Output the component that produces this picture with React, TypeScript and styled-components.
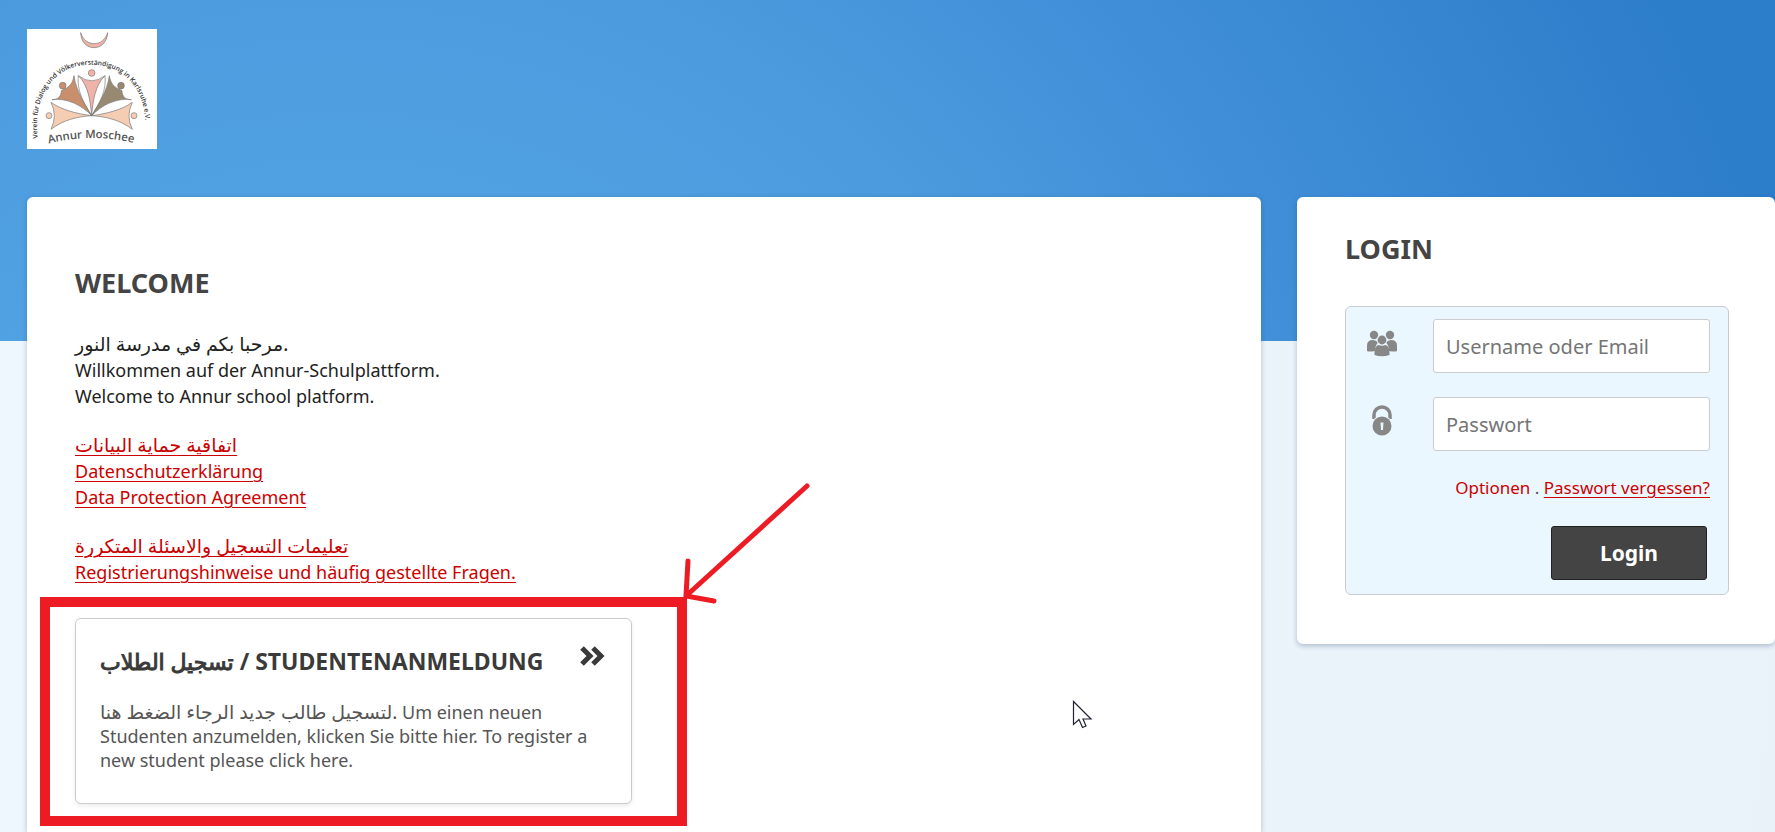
import React from "react";
import styled, { createGlobalStyle } from "styled-components";

const GlobalStyle = createGlobalStyle`
  *, *::before, *::after { box-sizing: border-box; }
  body {
    margin: 0;
    font-family: "Noto Sans", "DejaVu Sans", sans-serif;
    font-size: 18px;
    line-height: 26px;
    color: #222;
    background: #edf5fd;
  }
  h1, h2, h3, p { margin: 0; }
`;

const Page = styled.div`
  position: relative;
  display: flex;
  flex-direction: column;
  min-height: 100vh;
  overflow: hidden;
  background: linear-gradient(100deg, #eef6fe, #e9f1f9);
`;

const Backdrop = styled.div`
  position: absolute;
  inset: 0 0 auto;
  height: 341px;
  background: radial-gradient(circle 1500px at 19% 700px, #52a4e4 25%, #4c9bde 50%, #418fd8 68%, #2c7dca 100%);
`;

const Header = styled.header`
  position: relative;
  padding: 29px 27px 48px;
`;

const Logo = styled.svg`
  display: block;
  width: 130px;
  height: 120px;
  background: #fff;
`;

const Columns = styled.div`
  position: relative;
  flex: 1;
  display: grid;
  grid-template-columns: 1234fr 478fr;
  gap: 36px;
  padding-left: 27px;
`;

const Main = styled.main`
  position: relative;
  padding: 66px 48px 29px;
  background: #fff;
  border-radius: 6px 6px 0 0;
  box-shadow: 0 1px 5px rgba(40, 70, 100, 0.3);
`;

const Aside = styled.aside`
  align-self: start;
  padding: 32px 46px 49px 48px;
  background: #fff;
  border-radius: 6px;
  box-shadow: 0 2px 5px rgba(40, 70, 100, 0.3);
`;

const Title = styled.h1`
  font-size: 27px;
  line-height: 40px;
  color: #444;
`;

const Block = styled.p`
  margin-top: 23px;
`;

const Intro = styled(Block)`
  margin-top: 28px;
`;

const Line = styled.span`
  display: block;
`;

const Arabic = styled.span`
  font-size: 19px;
  line-height: 1;
`;

const ArabicTitle = styled.span`
  font-size: 22px;
  line-height: 1;
  font-weight: 400;
  -webkit-text-stroke: 1px #3a3a3a;
`;

const TextLink = styled.a<{ $plain?: boolean }>`
  color: #c00;
  text-decoration: ${(p) => (p.$plain ? "none" : "underline")};
  text-decoration-thickness: 1px;
  text-underline-offset: 3px;
`;

const Highlighted = styled.div`
  position: relative;
  width: 557px;
  max-width: 100%;
  margin-top: 33px;
`;

const Frame = styled.div`
  position: absolute;
  inset: -21px -55px -22px -35px;
  border: 10px solid #ed1c24;
  pointer-events: none;
`;

const Arrow = styled.svg`
  position: absolute;
  left: 100%;
  top: -138px;
  width: 190px;
  height: 130px;
  fill: none;
  stroke: #ed1c24;
  stroke-width: 5;
  stroke-linecap: round;
  pointer-events: none;
`;

const Card = styled.a`
  display: block;
  padding: 24px 24px 31px;
  border: 1px solid #ccc;
  border-radius: 6px;
  background: #fff;
  color: #555;
  text-decoration: none;
  box-shadow: 0 2px 4px rgba(0, 0, 0, 0.08);
`;

const CardHead = styled.div`
  display: flex;
  justify-content: space-between;
  align-items: flex-start;
  padding-right: 2px;
`;

const CardTitle = styled.h2`
  font-size: 23px;
  line-height: 36px;
  color: #3a3a3a;
  white-space: nowrap;
`;

const Chevrons = styled.svg`
  width: 26px;
  height: 26px;
  fill: none;
  stroke: #3a3a3a;
  stroke-width: 5;
`;

const CardText = styled.p`
  margin-top: 21px;
  line-height: 24px;
`;

const Form = styled.form`
  display: flex;
  flex-direction: column;
  margin-top: 37px;
  padding: 12px 18px 14px 21px;
  border: 1px solid #ccc;
  border-radius: 6px;
  background: #ebf7ff;
`;

const Field = styled.div`
  display: flex;
  justify-content: space-between;
  align-items: flex-start;
  margin-bottom: 24px;
`;

const FieldLabel = styled.label`
  display: flex;
  padding-top: 7px;
  svg { width: 30px; height: 36px; fill: #878787; }
`;

const Input = styled.input`
  width: 277px;
  height: 54px;
  padding: 0 12px;
  border: 1px solid #ccc;
  border-radius: 3px;
  background: #fff;
  font: 20px "Noto Sans", sans-serif;
  &::placeholder { color: #757575; opacity: 1; }
`;

const Options = styled.p`
  align-self: flex-end;
  font-size: 17px;
  color: #555;
`;

const Submit = styled.button`
  align-self: flex-end;
  width: 156px;
  height: 54px;
  margin: 25px 3px 0 0;
  border: 1px solid #222;
  border-radius: 3px;
  background: #444;
  color: #fff;
  font: bold 21px "Noto Sans", sans-serif;
`;

const Pointer = styled.svg`
  position: absolute;
  left: 1045px;
  top: 503px;
  width: 22px;
  height: 30px;
`;

function MosqueLogo() {
  return (
    <Logo viewBox="21 27 390 360" role="img" aria-label="Annur Moschee">
      <defs>
        <path id="ring" d="M53,355 C38,215 110,134 213,134 C316,134 390,215 375,355" />
        <path id="base" d="M86,371 Q215,337 351,371" />
      </defs>
      <g stroke="#777" strokeWidth="2">
        <path fill="#f0b3a9" d="M182,38 C184,98 260,98 263,38 C250,82 195,82 182,38Z" />
        <path fill="#f4cdb2" d="M93,247 Q113,287 93,328 C130,300 170,290 215,287 C170,281 125,270 93,247Z" />
        <path fill="#f4cdb2" d="M337,247 Q317,287 337,328 C300,300 260,290 215,287 C260,281 305,270 337,247Z" />
        <path fill="#c98f6c" d="M162,167 C158,190 150,201 124,212 C124,229 114,239 96,239 C140,233 185,255 215,287 C197,255 168,215 162,167Z" />
        <path fill="#988972" d="M268,167 C272,190 280,201 306,212 C306,229 316,239 334,239 C290,233 245,255 215,287 C233,255 262,215 268,167Z" />
        <path fill="#f0b3a9" d="M175,167 Q215,198 255,167 C226,195 219,240 215,287 C211,240 204,195 175,167Z" />
        <path fill="none" d="M175,167 C170,210 190,250 215,287 M255,167 C260,210 240,250 215,287" />
        <circle cx="215" cy="159" r="10" fill="#f0b3a9" />
        <circle cx="128" cy="197" r="10" fill="#c98f6c" />
        <circle cx="303" cy="197" r="10" fill="#988972" />
        <circle cx="87" cy="287" r="9" fill="#f4cdb2" />
        <circle cx="342" cy="287" r="9" fill="#f4cdb2" />
      </g>
      <g fill="#333" fontFamily="Open Sans, Noto Sans, sans-serif" fontWeight="600">
        <text fontSize="20">
          <textPath href="#ring">Verein für Dialog und Völkerverständigung in Karlsruhe e.V.</textPath>
        </text>
        <text fontSize="34" fill="#555">
          <textPath href="#base">Annur Moschee</textPath>
        </text>
      </g>
    </Logo>
  );
}

export default function App() {
  return (
    <>
      <GlobalStyle />
      <Page>
        <Backdrop />
        <Header>
          <MosqueLogo />
        </Header>
        <Columns>
          <Main>
            <Title>WELCOME</Title>
            <Intro>
              <Line><Arabic>مرحبا بكم في مدرسة النور.</Arabic></Line>
              <Line>Willkommen auf der Annur-Schulplattform.</Line>
              <Line>Welcome to Annur school platform.</Line>
            </Intro>
            <Block>
              <Line><TextLink href="#datenschutz"><Arabic>اتفاقية حماية البيانات</Arabic></TextLink></Line>
              <Line><TextLink href="#datenschutz">Datenschutzerklärung</TextLink></Line>
              <Line><TextLink href="#datenschutz">Data Protection Agreement</TextLink></Line>
            </Block>
            <Block>
              <Line><TextLink href="#hinweise"><Arabic>تعليمات التسجيل والاسئلة المتكررة</Arabic></TextLink></Line>
              <Line><TextLink href="#hinweise">Registrierungshinweise und häufig gestellte Fragen.</TextLink></Line>
            </Block>
            <Highlighted>
              <Card href="#anmeldung">
                <CardHead>
                  <CardTitle><ArabicTitle>تسجيل الطلاب</ArabicTitle> / STUDENTENANMELDUNG</CardTitle>
                  <Chevrons viewBox="0 0 26 26" aria-hidden="true">
                    <path d="M3 5L11 13L3 21M14 5L22 13L14 21" />
                  </Chevrons>
                </CardHead>
                <CardText>
                  <Arabic>لتسجيل طالب جديد الرجاء الضغط هنا.</Arabic> Um einen neuen Studenten anzumelden, klicken Sie bitte hier. To register a new student please click here.
                </CardText>
              </Card>
              <Frame />
              <Arrow viewBox="0 0 190 130" aria-hidden="true">
                <path d="M175 6L54 116M56 81L54 116L82 121" />
              </Arrow>
            </Highlighted>
            <Pointer viewBox="0 0 22 30" aria-hidden="true">
              <path d="M1.5 1.5V24.5L7 19.5L10.5 27.5L14 26L11 19H19Z" fill="#fff" stroke="#223" strokeWidth="1.2" />
            </Pointer>
          </Main>
          <Aside>
            <Title as="h2">LOGIN</Title>
            <Form onSubmit={(e) => e.preventDefault()}>
              <Field>
                <FieldLabel htmlFor="user" aria-label="Username oder Email">
                  <svg viewBox="0 0 30 36">
                    <circle cx="7" cy="9" r="4.2" />
                    <circle cx="23" cy="9" r="4.2" />
                    <path d="M0 25V19.500Q0 14 6 14Q9 14 11 16.500Q8 19.500 8 25Q2 26 0 25ZM30 25V19.500Q30 14 24 14Q21 14 19 16.500Q22 19.500 22 25Q28 26 30 25Z" />
                    <circle cx="15" cy="14" r="5.2" fill="#ebf7ff" />
                    <circle cx="15" cy="14" r="4.4" />
                    <path d="M7.500 29V26Q8 19.500 11.500 19Q15 20.500 18.500 19Q22 19.500 22.500 26V29Q15 31.500 7.500 29Z" />
                  </svg>
                </FieldLabel>
                <Input id="user" type="text" placeholder="Username oder Email" />
              </Field>
              <Field>
                <FieldLabel htmlFor="pass" aria-label="Passwort">
                  <svg viewBox="0 0 30 36">
                    <path d="M7 15V11A8 8 0 0 1 23 11V15" fill="none" stroke="#878787" strokeWidth="3.500" />
                    <circle cx="15" cy="22" r="10.500" fill="#ebf7ff" />
                    <circle cx="15" cy="22" r="9.500" />
                    <path d="M13.500 18.500H16.500L16 26H14Z" fill="#ebf7ff" />
                  </svg>
                </FieldLabel>
                <Input id="pass" type="password" placeholder="Passwort" />
              </Field>
              <Options>
                <TextLink $plain href="#optionen">Optionen</TextLink> . <TextLink href="#vergessen">Passwort vergessen?</TextLink>
              </Options>
              <Submit type="submit">Login</Submit>
            </Form>
          </Aside>
        </Columns>
      </Page>
    </>
  );
}
